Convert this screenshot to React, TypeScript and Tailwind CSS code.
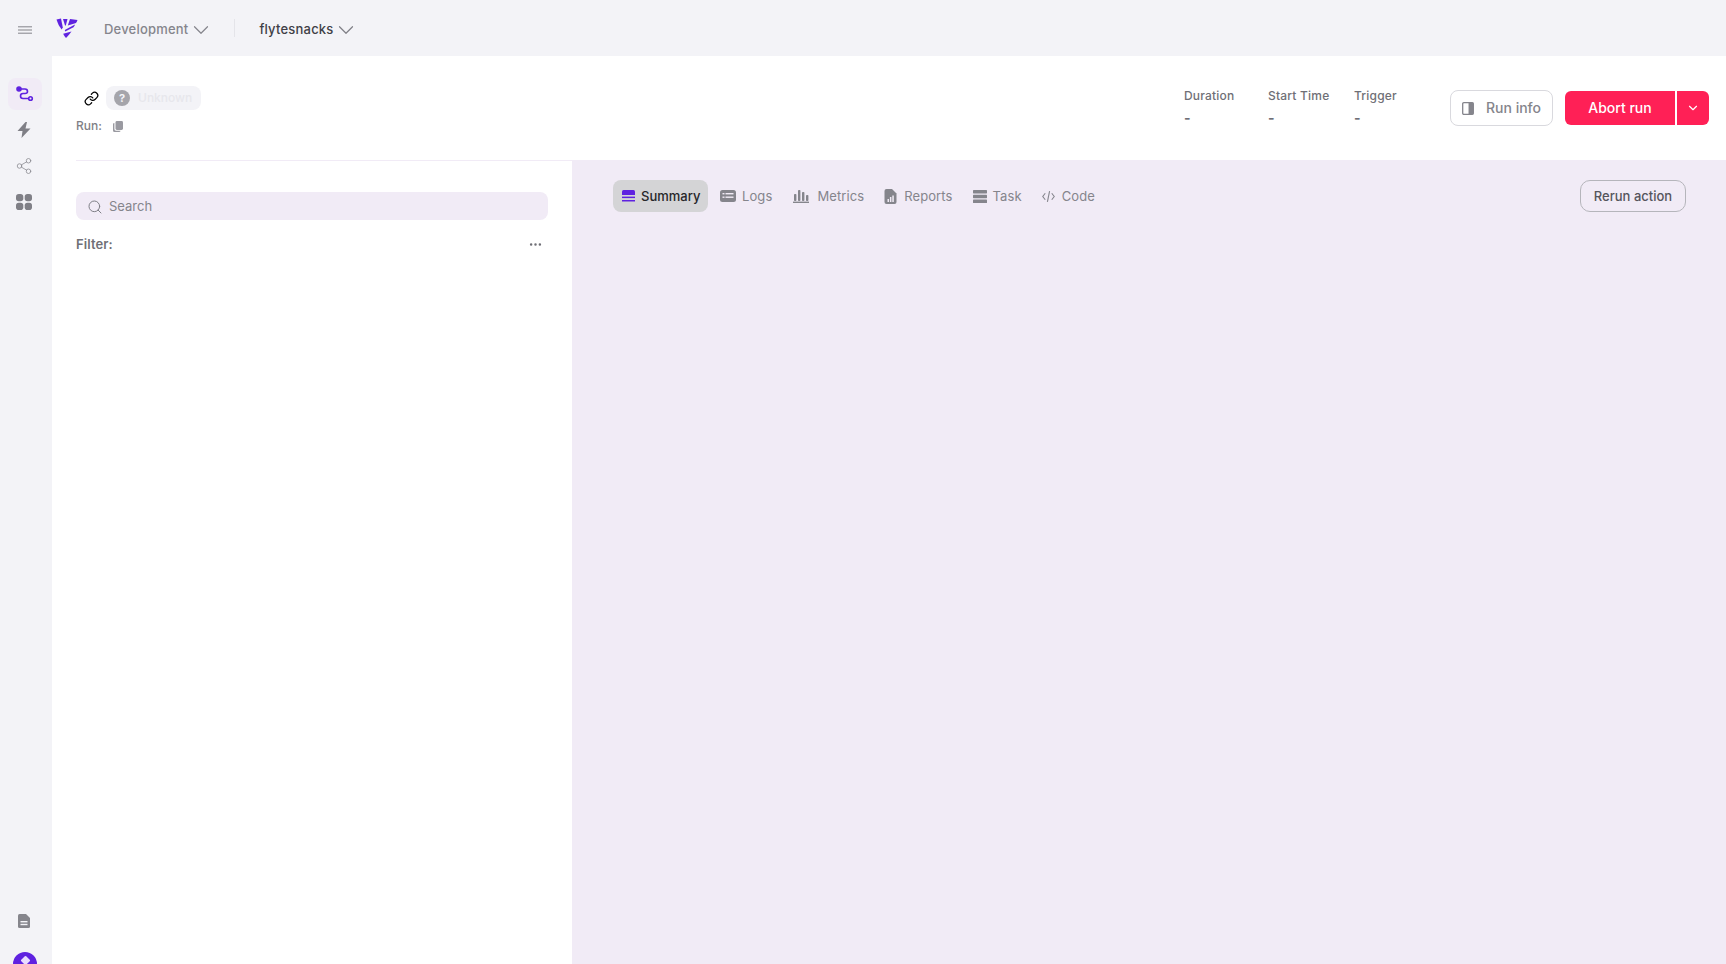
import { ChevronDown, Ellipsis, Link, Search, Share2 } from "lucide-react";

const tabClass = "flex items-center h-8 text-[13px] tracking-[0.1px] text-[#85858c]";

function Logo() {
  return (
    <svg width="22" height="20" viewBox="0 0 22 20" fill="#5f22e0">
      <path d="M0.5 1.5 L5 0.5 L6.8 9.5 L5.6 11.5 Q2 7 0.5 1.5Z" />
      <path d="M7 1 L11.5 1 L9.8 7.5 L9 7.5Z" />
      <path d="M14 1 L21.5 2 Q21 3.5 20 5 L11.8 7.5Z" />
      <path d="M19 6.5 Q18.5 8 17.5 9.2 L9.2 13.5 L8.8 12Z" />
      <path d="M15.5 13.5 Q13 17 10 20 Q8 18 7.2 15.8Z" />
    </svg>
  );
}

function Hamburger() {
  return (
    <svg width="14" height="8" viewBox="0 0 14 8" stroke="#8c8c93" strokeWidth="1.1">
      <path d="M0 0.8 H14" />
      <path d="M0 4 H14" />
      <path d="M0 7.2 H14" />
    </svg>
  );
}

function RouteIcon() {
  return (
    <svg width="18" height="16" viewBox="0 0 18 16" fill="none" stroke="#5f22e0" strokeWidth="1.6">
      <circle cx="3" cy="3" r="2" fill="#5f22e0" />
      <circle cx="14.5" cy="12.5" r="1.8" />
      <path d="M5 3 H9 Q11.5 3 11.5 5.5 Q11.5 7.5 9 7.5 H7 Q4.5 7.5 4.5 10 Q4.5 12.5 7 12.5 H12.7" />
    </svg>
  );
}

function BoltIcon() {
  return (
    <svg width="14" height="16" viewBox="0 0 14 16" fill="#7f7f86">
      <path d="M8.5 0 L0.5 9 H5.5 L4.5 16 L13.5 6.5 H8.5 L10 0Z" />
    </svg>
  );
}

function GridIcon() {
  return (
    <svg width="16" height="16" viewBox="0 0 16 16" fill="#7f7f86">
      <rect x="0" y="0" width="7.3" height="7.3" rx="2.8" />
      <rect x="8.7" y="0" width="7.3" height="7.3" rx="2.8" />
      <rect x="0" y="8.7" width="7.3" height="7.3" rx="2.8" />
      <rect x="8.7" y="8.7" width="7.3" height="7.3" rx="2.8" />
    </svg>
  );
}

function DocIcon() {
  return (
    <svg width="12" height="14" viewBox="0 0 12 14">
      <path d="M1.5 0 H8 L12 4 V12.5 Q12 14 10.5 14 H1.5 Q0 14 0 12.5 V1.5 Q0 0 1.5 0Z" fill="#85858c" />
      <rect x="2.5" y="7" width="7" height="1.4" fill="#f3f3f7" />
      <rect x="2.5" y="9.8" width="7" height="1.4" fill="#f3f3f7" />
    </svg>
  );
}

function CopyIcon() {
  return (
    <svg width="10" height="11" viewBox="0 0 10 11" fill="#9a9aa1">
      <rect x="2.5" y="0" width="7.5" height="9" rx="1.4" />
      <path d="M0 3 Q0 2 1.4 2 V8 Q1.4 9.7 3 9.7 H7.5 Q7.5 11 6 11 H1.5 Q0 11 0 9.5Z" />
    </svg>
  );
}

function SummaryIcon() {
  return (
    <svg width="13" height="12" viewBox="0 0 13 12" fill="#5f22e0">
      <path d="M1.5 0 H11.5 Q13 0 13 1.5 V5 H0 V1.5 Q0 0 1.5 0Z" />
      <rect x="0" y="6.6" width="13" height="1.5" />
      <rect x="0" y="10" width="13" height="1.5" />
    </svg>
  );
}

function LogsIcon() {
  return (
    <svg width="16" height="12" viewBox="0 0 16 12">
      <rect width="16" height="12" rx="2.5" fill="#85858c" />
      <rect x="2.5" y="3" width="2" height="1.4" fill="#f1ebf6" />
      <rect x="5.5" y="3" width="8" height="1.4" fill="#f1ebf6" />
      <rect x="2.5" y="6.5" width="2" height="1.4" fill="#f1ebf6" />
      <rect x="5.5" y="6.5" width="8" height="1.4" fill="#f1ebf6" />
    </svg>
  );
}

function MetricsIcon() {
  return (
    <svg width="16" height="13" viewBox="0 0 16 13" fill="#85858c">
      <rect x="1" y="4" width="2.4" height="7" rx="0.8" />
      <rect x="5" y="0" width="2.4" height="11" rx="0.8" />
      <rect x="9" y="2" width="2.4" height="9" rx="0.8" />
      <rect x="13" y="5" width="2.4" height="6" rx="0.8" />
      <rect x="0" y="11.6" width="16" height="1.4" />
    </svg>
  );
}

function ReportsIcon() {
  return (
    <svg width="13" height="15" viewBox="0 0 12 15">
      <path d="M2 0 H7.5 L12 4.5 V13 Q12 15 10 15 H2 Q0 15 0 13 V2 Q0 0 2 0Z" fill="#85858c" />
      <rect x="3" y="10" width="1.5" height="3" fill="#f1ebf6" />
      <rect x="5.4" y="8" width="1.5" height="5" fill="#f1ebf6" />
      <rect x="7.8" y="6.5" width="1.5" height="6.5" fill="#f1ebf6" />
    </svg>
  );
}

function TaskIcon() {
  return (
    <svg width="14" height="13" viewBox="0 0 14 13" fill="#85858c">
      <rect y="0" width="14" height="3.4" rx="0.6" />
      <rect y="4.8" width="14" height="3.4" rx="0.6" />
      <rect y="9.6" width="14" height="3.4" rx="0.6" />
    </svg>
  );
}

function CodeIcon() {
  return (
    <svg width="13" height="13" viewBox="0 0 12 12" fill="none" stroke="#85858c" strokeWidth="1">
      <path d="M3 3 L0.7 6 L3 9" />
      <path d="M9 3 L11.3 6 L9 9" />
      <path d="M7 1 L5 11" />
    </svg>
  );
}

function PanelIcon() {
  return (
    <svg width="12" height="13" viewBox="0 0 11 12">
      <rect x="0.6" y="0.6" width="9.8" height="10.8" rx="1" fill="none" stroke="#85858c" strokeWidth="1.2" />
      <rect x="6" y="0.6" width="4.4" height="10.8" fill="#85858c" />
    </svg>
  );
}

function MetaItem({ label, width }: { label: string; width: string }) {
  return (
    <div className={`flex flex-col ${width}`}>
      <span className="text-xs font-medium leading-4 tracking-[0.2px] text-[#6f6f76]">{label}</span>
      <span className="mt-1 text-sm font-bold leading-5 text-[#6f6f76]">-</span>
    </div>
  );
}

export default function App() {
  return (
    <div className="flex h-screen flex-col overflow-hidden bg-[#f3f3f7] font-['Inter',sans-serif]">
      {/* Top bar */}
      <header className="flex h-14 shrink-0 items-center pt-[3px]">
        <div className="ml-[18px] flex"><Hamburger /></div>
        <div className="ml-6 -mt-[3px] flex"><Logo /></div>
        <button type="button" className="ml-[26px] flex items-center text-[13px] font-medium tracking-[0.2px] text-[#85858c]">
          Development
          <ChevronDown className="h-[26px] w-[26px]" strokeWidth={1.1} />
        </button>
        <div className="ml-5 -mt-[3px] h-[18px] w-px bg-[#e4e4e9]" />
        <button type="button" className="ml-6 flex items-center text-[13px] font-medium tracking-[0.2px] text-[#3f3f46]">
          flytesnacks
          <ChevronDown className="-ml-px h-[26px] w-[26px] text-[#7f7f86]" strokeWidth={1.1} />
        </button>
      </header>

      <div className="flex min-h-0 flex-1">
        {/* Sidebar */}
        <aside className="flex w-[52px] shrink-0 flex-col items-center justify-between pr-[2px]">
          <div className="mt-[22px] flex flex-col items-center">
            <div className="flex h-8 w-[34px] items-center justify-center rounded-lg bg-[#f1ebf6]"><RouteIcon /></div>
            <div className="mt-2 flex h-[24px] w-[34px] items-center justify-center pr-[2px]"><BoltIcon /></div>
            <div className="mt-3 flex h-[24px] w-[34px] items-center justify-center pr-[2px]">
              <Share2 className="h-[18px] w-[18px] text-[#85858c]" strokeWidth={1} />
            </div>
            <div className="mt-3 flex h-[24px] w-[34px] items-center justify-center pr-[2px]"><GridIcon /></div>
          </div>
          <div className="flex flex-col items-center">
            <div className="flex pr-[2px]"><DocIcon /></div>
            <div className="mt-6 -mb-3 flex h-6 w-6 items-start justify-center rounded-full bg-[#5f22e0] pt-[5px]">
              <div className="h-[7px] w-[7px] rotate-45 rounded-[1px] bg-[#e9dcff]" />
            </div>
          </div>
        </aside>

        {/* Main */}
        <main className="flex min-w-0 flex-1 flex-col bg-white">
          <div className="flex h-[104px] shrink-0 items-start justify-between pl-6 pr-[17px]">
            <div className="pt-[30px]">
              <div className="flex items-center">
                <Link className="ml-2 h-[15px] w-[15px] text-black" strokeWidth={2} />
                <div className="ml-[7px] flex h-6 w-[95px] items-center gap-2 rounded-lg bg-[#f3f3f7] pl-2">
                  <span className="flex h-4 w-4 items-center justify-center rounded-full bg-[#a5a5ab] text-[11px] font-bold text-[#f3f3f7]">?</span>
                  <span className="text-xs font-medium text-[#e7e7ec]">Unknown</span>
                </div>
              </div>
              <div className="mt-2 flex items-center gap-[11px]">
                <span className="text-xs font-medium leading-4 text-[#7f7f86]">Run:</span>
                <CopyIcon />
              </div>
            </div>
            <div className="flex items-start pt-8">
              <div className="flex">
                <MetaItem label="Duration" width="w-[84px]" />
                <MetaItem label="Start Time" width="w-[86px]" />
                <MetaItem label="Trigger" width="w-[96px]" />
              </div>
              <div className="mt-0.5 flex items-center">
                <button type="button" className="flex h-9 w-[103px] items-center justify-center gap-3 rounded-lg border border-[#d9d9de] text-sm font-medium text-[#85858c]">
                  <PanelIcon />
                  Run info
                </button>
                <div className="ml-3 flex h-[34px] text-sm font-medium text-white">
                  <button type="button" className="w-[110px] rounded-l-md bg-[#ff2056]">Abort run</button>
                  <button type="button" className="ml-0.5 flex w-8 items-center justify-center rounded-r-md bg-[#ff2056]">
                    <ChevronDown className="h-3.5 w-3.5" strokeWidth={2} />
                  </button>
                </div>
              </div>
            </div>
          </div>

          <div className="flex min-h-0 flex-1">
            {/* Left panel */}
            <section className="ml-6 w-[496px] shrink-0 border-t border-[#f1ebf6] pr-6 pt-[31px]">
              <div className="flex h-7 items-center gap-1.5 rounded-lg bg-[#f1ebf6] pl-[11px] pt-px">
                <Search className="h-4 w-4 text-[#7f7f86]" strokeWidth={1.5} />
                <span className="text-[13px] text-[#85858c]">Search</span>
              </div>
              <div className="mt-[15px] flex items-center justify-between pr-[5px]">
                <span className="text-[13px] font-semibold tracking-[0.1px] text-[#6f6f76]">Filter:</span>
                <Ellipsis className="h-[15px] w-[15px] text-[#6f6f76]" strokeWidth={2} />
              </div>
            </section>

            {/* Right panel */}
            <section className="min-w-0 flex-1 bg-[#f1ebf6] pl-[41px] pr-[40px] pt-5">
              <div className="flex items-center justify-between">
                <div className="flex items-center">
                  <div className="flex h-8 w-[95px] items-center gap-[6px] rounded-lg bg-[#d4d4d6] pl-[9px] text-[13px] font-medium text-[#27272a]">
                    <SummaryIcon />
                    <span className="pt-px">Summary</span>
                  </div>
                  <div className={`${tabClass} ml-3 gap-[6px]`}><LogsIcon /> <span className="pt-px">Logs</span></div>
                  <div className={`${tabClass} ml-[21px] gap-2`}><MetricsIcon /> <span className="pt-px">Metrics</span></div>
                  <div className={`${tabClass} ml-5 gap-[7px]`}><ReportsIcon /> <span className="pt-px">Reports</span></div>
                  <div className={`${tabClass} ml-5 gap-1.5`}><TaskIcon /> <span className="pt-px">Task</span></div>
                  <div className={`${tabClass} ml-5 gap-[7px]`}><CodeIcon /> <span className="pt-px">Code</span></div>
                </div>
                <button type="button" className="h-8 w-[106px] rounded-[10px] border border-[#b5b5bb] pt-px text-[13px] font-medium text-[#55555c]">Rerun action</button>
              </div>
            </section>
          </div>
        </main>
      </div>
    </div>
  );
}
